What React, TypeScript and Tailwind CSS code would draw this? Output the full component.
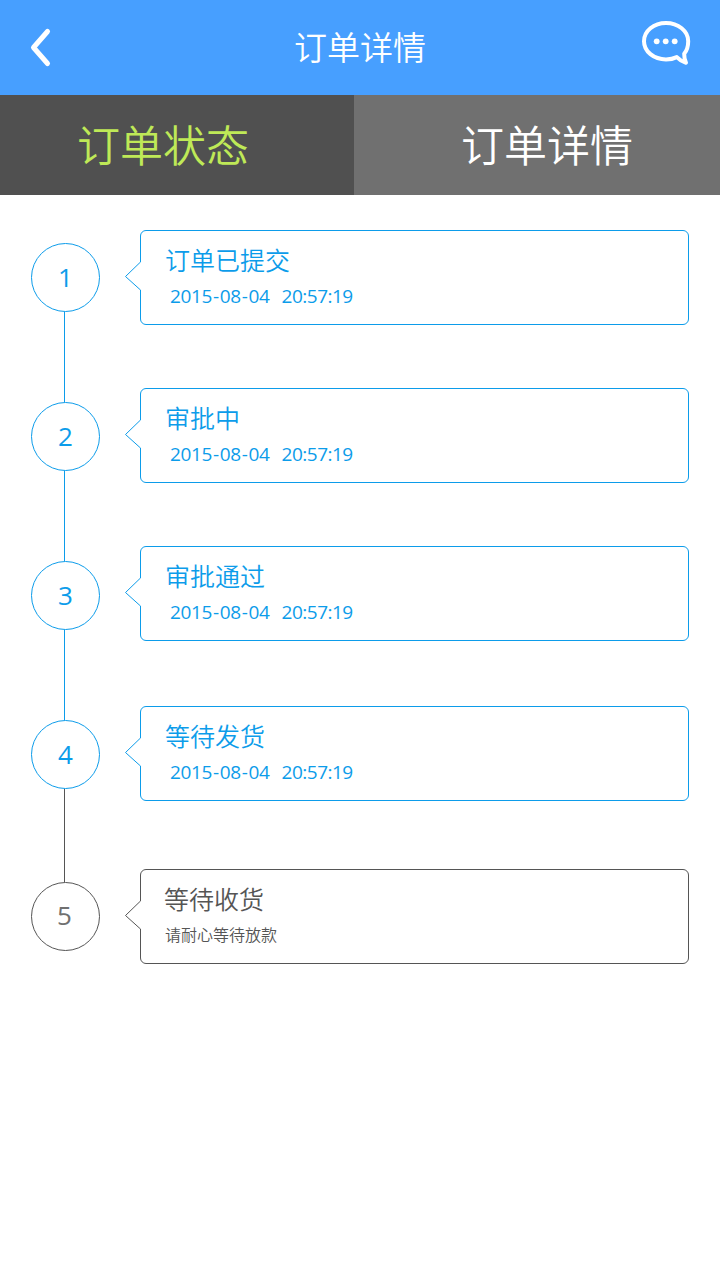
import React from "react";

type Step = {
  title: string;
  date?: string;
  time?: string;
  note?: string;
  done: boolean;
  line?: string;
  gap: string;
};

const steps: Step[] = [
  { title: "订单已提交", date: "2015-08-04", time: "20:57:19", done: true, line: "h-[90px] bg-[#0c9cea]", gap: "mb-[63px]" },
  { title: "审批中", date: "2015-08-04", time: "20:57:19", done: true, line: "h-[90px] bg-[#0c9cea]", gap: "mb-[63px]" },
  { title: "审批通过", date: "2015-08-04", time: "20:57:19", done: true, line: "h-[90px] bg-[#0c9cea]", gap: "mb-[65px]" },
  { title: "等待发货", date: "2015-08-04", time: "20:57:19", done: true, line: "h-[93px] bg-[#555555]", gap: "mb-[68px]" },
  { title: "等待收货", note: "请耐心等待放款", done: false, gap: "" },
];

function Header() {
  return (
    <header className="flex h-[95px] items-center justify-between bg-[#479fff] pr-[29px] pl-[30px] text-white">
      <svg width="49" height="95" viewBox="0 0 49 95" fill="none" stroke="currentColor" strokeWidth="5" strokeLinecap="round" strokeLinejoin="round">
        <path d="M17.500 31.500 3.500 47.500l14 16" />
      </svg>
      <h1 className="h-[95px] text-[33px] leading-[93px] font-[350] whitespace-nowrap">订单详情</h1>
      <svg width="50" height="95" viewBox="0 0 50 95" fill="none">
        <path
          d="M25 23C12.8 23 3 31 3 41.2s9.800 18.200 22 18.200c4 0 7.700-.8 10.800-2.300 2.300 2.400 5.400 4.600 9.200 5.700-1.200-2.700-1.900-5.800-1.800-9C46 50.300 47.200 46 47.200 41.200 47.200 31 37.200 23 25 23Z"
          stroke="currentColor"
          strokeWidth="4"
          strokeLinejoin="round"
        />
        <circle cx="15.700" cy="41.300" r="2.900" fill="currentColor" />
        <circle cx="24.700" cy="41.300" r="2.900" fill="currentColor" />
        <circle cx="33.700" cy="41.300" r="2.900" fill="currentColor" />
      </svg>
    </header>
  );
}

function Tabs() {
  return (
    <nav className="flex h-[100px] text-[43px] leading-[97px] font-[350]">
      <button className="flex w-[354px] items-start bg-[#505050] pl-[77px] text-[#bfe957]">订单状态</button>
      <button className="flex flex-1 items-start bg-[#707070] pl-[107px] text-white">订单详情</button>
    </nav>
  );
}

function Track() {
  return (
    <div className="mt-[13px] flex w-[69px] flex-col">
      {steps.map((s, i) => (
        <React.Fragment key={s.title}>
          <div
            className={`flex h-[69px] w-[69px] items-center justify-center rounded-full border font-['Open_Sans','Noto_Sans',sans-serif] text-[26px] leading-none ${
              s.done ? "border-[#0c9cea] pb-[2px] text-[#0c9cea]" : "border-[#555555] pr-[2px] pb-[4px] text-[#707070]"
            }`}
          >
            {i + 1}
          </div>
          {s.line && <div className={`ml-[33px] w-px ${s.line}`} />}
        </React.Fragment>
      ))}
    </div>
  );
}

function DateText({ value }: { value: string }) {
  return (
    <span className="tracking-[-0.4px]">
      {value.split("-").map((part, i) => (
        <React.Fragment key={i}>
          {i > 0 && <span className="mx-[1.1px]">-</span>}
          {part}
        </React.Fragment>
      ))}
    </span>
  );
}

function Card({ step }: { step: Step }) {
  return (
    <div
      className={`relative h-[95px] w-[549px] rounded-[6px] border pl-[24px] ${step.gap} ${
        step.done ? "border-[#0c9cea] text-[#0c9cea]" : "border-[#555555] text-[#555555]"
      }`}
    >
      <svg className="absolute top-[30px] -left-[17px]" width="18" height="30" viewBox="0 0 18 30" fill="none">
        <path d="M18 0H16.500V1L1.500 15.500 16.500 29v1H18Z" fill="white" />
        <path d="M16.500 0v1L1.500 15.500 16.500 29v1" stroke="currentColor" />
      </svg>
      <div className={`pt-[9px] text-[25px] leading-[38px] font-[350] ${step.done ? "" : "-ml-px"}`}>{step.title}</div>
      {step.note ? (
        <div className="mt-[5px] text-[16px] leading-[24px] font-[350]">{step.note}</div>
      ) : (
        <div className="ml-[5px] flex gap-[12px] pt-[6px] font-['Open_Sans','Noto_Sans',sans-serif] text-[19px] leading-[24px]">
          <DateText value={step.date ?? ""} />
          <span className="tracking-[-0.5px]">{step.time}</span>
        </div>
      )}
    </div>
  );
}

export default function App() {
  return (
    <div className="min-h-[1280px] w-[720px] bg-white font-['Noto_Sans_CJK_SC',sans-serif]">
      <Header />
      <Tabs />
      <main className="flex gap-[40px] pt-[35px] pl-[31px]">
        <Track />
        <div className="flex flex-col">
          {steps.map((s) => (
            <Card key={s.title} step={s} />
          ))}
        </div>
      </main>
    </div>
  );
}
